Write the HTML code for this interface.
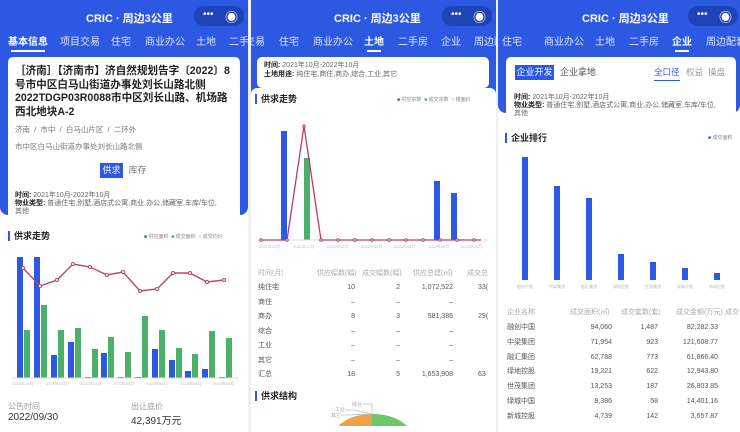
<!DOCTYPE html>
<html><head><meta charset="utf-8">
<style>
*{margin:0;padding:0;box-sizing:border-box}
body{width:740px;height:432px;overflow:hidden;background:#eef0f4;font-family:"Liberation Sans","Noto Sans CJK SC",sans-serif;position:relative;color:#333}
.a{position:absolute;white-space:nowrap}
.p{position:absolute;top:0;height:432px;overflow:hidden;background:#fff}
.blue{position:absolute;background:#2c58e2}
.hd{color:#fff;font-weight:bold;font-size:11px}
.cap{position:absolute;width:50px;height:20px;border-radius:10px;background:#1f44b8;color:#fff;font-size:10px}
.tab{position:absolute;top:33px;color:#dfe6ff;font-size:10px;white-space:nowrap}
.tab.on{color:#fff;font-weight:bold}
.tab.on:after{content:"";position:absolute;left:3px;right:3px;bottom:-4px;height:2px;background:#fff}
.card{position:absolute;background:#fff;border-radius:5px}
.s{font-size:7px;color:#666}
.s b{color:#222}
.sec{font-size:9px;font-weight:bold;color:#222;border-left:2px solid #2c58e2;padding-left:4px;line-height:10px}
.tr{font-size:7px;color:#555}
.th{font-size:7px;color:#aaa}
</style></head><body>

<!-- PANEL 1 -->
<div class="p" style="left:0;width:248px">
  <div class="blue" style="left:0;top:0;width:248px;height:215px;border-radius:0 0 8px 8px"></div>
  <div class="a hd" style="left:86px;top:10px">CRIC · 周边3公里</div>
  <div class="cap" style="left:194px;top:6px"><span class="a" style="left:9px;top:3px">•••</span><span class="a" style="left:31px;top:1px;font-size:13px">◉</span></div>
  <div class="tab on" style="left:8px">基本信息</div>
  <div class="tab" style="left:60px">项目交易</div>
  <div class="tab" style="left:111px">住宅</div>
  <div class="tab" style="left:145px">商业办公</div>
  <div class="tab" style="left:196px">土地</div>
  <div class="tab" style="left:229px">二手交易</div>
  <div class="card" style="left:8px;top:57px;width:232px;height:162px"></div>
  <div class="a" style="left:15px;top:65px;font-size:10.6px;font-weight:bold;color:#222;line-height:13.6px">［济南］【济南市】济自然规划告字〔2022〕8<br>号市中区白马山街道办事处刘长山路北侧<br>2022TDGP03R0088市中区刘长山路、机场路<br>西北地块A-2</div>
  <div class="a" style="left:15px;top:124px;font-size:7.5px;color:#777">济南 &nbsp;/&nbsp; 市中 &nbsp;/&nbsp; 白马山片区 &nbsp;/&nbsp; 二环外</div>
  <div class="a" style="left:15px;top:141px;font-size:7.5px;color:#777">市中区白马山街道办事处刘长山路北侧</div>
  <div class="a" style="left:100px;top:163px;width:23px;height:15px;background:#2c58e2;color:#fff;font-size:9px;text-align:center;line-height:15px">供求</div>
  <div class="a" style="left:125px;top:163px;width:25px;height:15px;color:#777;font-size:9px;text-align:center;line-height:15px">库存</div>
  <div class="a s" style="left:15px;top:192px;line-height:8px"><b>时间:</b> 2021年10月-2022年10月<br><b>物业类型:</b> 普通住宅,别墅,酒店式公寓,商业,办公,储藏室,车库/车位,<br>其他</div>
  <div class="a sec" style="left:8px;top:231px">供求走势</div>
  <div class="a" style="left:144px;top:233px;font-size:5px;color:#888"><span style="color:#2c58e2">■</span> 供应面积 &nbsp;<span style="color:#4caf6a">■</span> 成交面积 &nbsp;○ 成交均价</div>
  <svg class="a" style="left:0;top:250px" width="248" height="140">
    <g fill="#2c58e2">
      <rect x="17" y="7" width="6" height="121"/><rect x="34" y="7" width="6" height="121"/><rect x="51" y="105" width="6" height="23"/><rect x="68" y="92" width="6" height="36"/><rect x="85" y="127" width="6" height="1"/><rect x="101" y="103" width="6" height="25"/><rect x="118" y="127" width="6" height="1"/><rect x="135" y="127" width="6" height="1"/><rect x="152" y="99" width="6" height="29"/><rect x="169" y="110" width="6" height="18"/><rect x="185" y="121" width="6" height="7"/><rect x="202" y="119" width="6" height="9"/><rect x="219" y="127" width="6" height="1"/>
    </g>
    <g fill="#4caf6a">
      <rect x="24" y="80" width="6" height="48"/><rect x="41" y="55" width="6" height="73"/><rect x="58" y="80" width="6" height="48"/><rect x="75" y="78" width="6" height="50"/><rect x="92" y="99" width="6" height="29"/><rect x="108" y="87" width="6" height="41"/><rect x="125" y="102" width="6" height="26"/><rect x="142" y="66" width="6" height="62"/><rect x="159" y="80" width="6" height="48"/><rect x="176" y="98" width="6" height="30"/><rect x="192" y="104" width="6" height="24"/><rect x="209" y="81" width="6" height="47"/><rect x="226" y="88" width="6" height="40"/>
    </g>
    <polyline fill="none" stroke="#b9466a" stroke-width="1.4" points="23,18 40,36 57,30 73,14 90,17 107,25 123,22 140,41 157,39 173,23 190,23 207,32 224,30"/>
    <g fill="#fff" stroke="#b9466a" stroke-width="1"><circle cx="23" cy="18" r="1.5"/><circle cx="40" cy="36" r="1.5"/><circle cx="57" cy="30" r="1.5"/><circle cx="73" cy="14" r="1.5"/><circle cx="90" cy="17" r="1.5"/><circle cx="107" cy="25" r="1.5"/><circle cx="123" cy="22" r="1.5"/><circle cx="140" cy="41" r="1.5"/><circle cx="157" cy="39" r="1.5"/><circle cx="173" cy="23" r="1.5"/><circle cx="190" cy="23" r="1.5"/><circle cx="207" cy="32" r="1.5"/><circle cx="224" cy="30" r="1.5"/></g>
    <line x1="12" y1="128" x2="238" y2="128" stroke="#ddd"/>
    <g font-size="4" fill="#bbb"><text x="12" y="135">2021年10月</text><text x="46" y="135">2021年12月</text><text x="80" y="135">2022年02月</text><text x="113" y="135">2022年04月</text><text x="146" y="135">2022年06月</text><text x="180" y="135">2022年08月</text><text x="213" y="135">2022年10月</text></g>
  </svg>
  <div class="a" style="left:8px;top:401px;font-size:8px;color:#999">公告时间</div>
  <div class="a" style="left:8px;top:412px;font-size:10px;color:#333">2022/09/30</div>
  <div class="a" style="left:131px;top:401px;font-size:8px;color:#999">出让底价</div>
  <div class="a" style="left:131px;top:412px;font-size:10px;color:#333">42,391万元</div>
</div>

<!-- PANEL 2 -->
<div class="p" style="left:251px;width:245px">
  <div class="blue" style="left:0;top:0;width:245px;height:115px;border-radius:0 0 8px 8px"></div>
  <div class="a hd" style="left:83px;top:10px">CRIC · 周边3公里</div>
  <div class="cap" style="left:191px;top:6px"><span class="a" style="left:9px;top:3px">•••</span><span class="a" style="left:31px;top:1px;font-size:13px">◉</span></div>
  <div class="tab" style="left:-6px">交易</div>
  <div class="tab" style="left:28px">住宅</div>
  <div class="tab" style="left:62px">商业办公</div>
  <div class="tab on" style="left:113px">土地</div>
  <div class="tab" style="left:147px">二手房</div>
  <div class="tab" style="left:190px">企业</div>
  <div class="tab" style="left:223px">周边配</div>
  <div class="card" style="left:6px;top:57px;width:232px;height:31px"></div>
  <div class="a s" style="left:13px;top:62px;line-height:8.5px"><b>时间:</b> 2021年10月-2022年10月<br><b>土地用途:</b> 纯住宅,商住,商办,综合,工业,其它</div>
  <div class="a" style="left:0;top:88px;width:245px;height:344px;background:#fff;border-radius:6px 6px 0 0"></div>
  <div class="a sec" style="left:4px;top:94px">供求走势</div>
  <div class="a" style="left:146px;top:96px;font-size:5px;color:#888"><span style="color:#2c58e2">■</span> 供应宗数 &nbsp;<span style="color:#4caf6a">■</span> 成交宗数 &nbsp;○ 楼面价</div>
  <svg class="a" style="left:0;top:110px" width="245" height="145">
    <rect x="30" y="21" width="6" height="109" fill="#2c58e2"/>
    <rect x="53" y="48" width="6" height="82" fill="#4caf6a"/>
    <rect x="183" y="71" width="6" height="59" fill="#2c58e2"/>
    <rect x="200" y="83" width="6" height="47" fill="#2c58e2"/>
    <line x1="10" y1="130" x2="238" y2="130" stroke="#ddd"/>
    <polyline fill="none" stroke="#c0396b" stroke-width="1.3" points="10,130 36,130 53,16 70,130 230,130"/>
    <g fill="#fff" stroke="#c0396b"><circle cx="10" cy="130" r="1.3"/><circle cx="36" cy="130" r="1.3"/><circle cx="53" cy="16" r="1.3"/><circle cx="70" cy="130" r="1.3"/><circle cx="87" cy="130" r="1.3"/><circle cx="104" cy="130" r="1.3"/><circle cx="121" cy="130" r="1.3"/><circle cx="138" cy="130" r="1.3"/><circle cx="155" cy="130" r="1.3"/><circle cx="172" cy="130" r="1.3"/><circle cx="189" cy="130" r="1.3"/><circle cx="206" cy="130" r="1.3"/><circle cx="223" cy="130" r="1.3"/></g>
    <g font-size="4" fill="#bbb"><text x="8" y="138">2021年10月</text><text x="42" y="138">2021年12月</text><text x="76" y="138">2022年02月</text><text x="110" y="138">2022年04月</text><text x="143" y="138">2022年06月</text><text x="177" y="138">2022年08月</text><text x="210" y="138">2022年10月</text></g>
  </svg>
  <div class="a th" style="left:7px;top:268px">时间(月)</div>
  <div class="a th" style="left:66px;top:268px">供应幅数(幅)</div>
  <div class="a th" style="left:111px;top:268px">成交幅数(幅)</div>
  <div class="a th" style="left:162px;top:268px">供应总建(㎡)</div>
  <div class="a th" style="left:216px;top:268px">成交总</div>
  <div class="a tr" style="left:7px;top:281px;line-height:14.5px">纯住宅<br>商住<br>商办<br>综合<br>工业<br>其它<br>汇总</div>
  <div class="a tr" style="left:80px;top:281px;line-height:14.5px;text-align:right;width:24px">10<br>–<br>8<br>–<br>–<br>–<br>18</div>
  <div class="a tr" style="left:125px;top:281px;line-height:14.5px;text-align:right;width:24px">2<br>–<br>3<br>–<br>–<br>–<br>5</div>
  <div class="a tr" style="left:160px;top:281px;line-height:14.5px;text-align:right;width:42px">1,072,522<br>–<br>581,386<br>–<br>–<br>–<br>1,653,908</div>
  <div class="a tr" style="left:227px;top:281px;line-height:14.5px">33(<br><br>29(<br><br><br><br>63</div>
  <div class="a sec" style="left:4px;top:391px">供求结构</div>
  <svg class="a" style="left:0;top:396px" width="245" height="36">
    <path d="M87,30 Q100,18 121,18 L121,30 Z" fill="#f0a04b"/>
    <path d="M121,18 Q143,18 156,30 L121,30 Z" fill="#6cc66a"/>
    <polyline points="121,18 121,8 112,8" fill="none" stroke="#bbb" stroke-width=".7"/>
    <polyline points="121,18 102,14 94,14" fill="none" stroke="#bbb" stroke-width=".7"/>
    <polyline points="121,18 98,19 90,19" fill="none" stroke="#bbb" stroke-width=".7"/>
    <g font-size="5" fill="#aaa"><text x="101" y="10">综合</text><text x="84" y="15">工业</text><text x="80" y="21">其它</text></g>
  </svg>
</div>

<!-- PANEL 3 -->
<div class="p" style="left:498px;width:242px">
  <div class="blue" style="left:0;top:0;width:242px;height:113px;border-radius:0 0 8px 8px"></div>
  <div class="a hd" style="left:84px;top:10px">CRIC · 周边3公里</div>
  <div class="cap" style="left:190px;top:6px"><span class="a" style="left:9px;top:3px">•••</span><span class="a" style="left:31px;top:1px;font-size:13px">◉</span></div>
  <div class="tab" style="left:4px">住宅</div>
  <div class="tab" style="left:46px">商业办公</div>
  <div class="tab" style="left:97px">土地</div>
  <div class="tab" style="left:131px">二手房</div>
  <div class="tab on" style="left:174px">企业</div>
  <div class="tab" style="left:208px">周边配套</div>
  <div class="card" style="left:8px;top:57px;width:230px;height:68px"></div>
  <div class="a" style="left:17px;top:65px;width:39px;height:15px;background:#2c58e2;color:#fff;font-size:9px;text-align:center;line-height:15px">企业开发</div>
  <div class="a" style="left:62px;top:65px;font-size:9px;color:#555;line-height:15px">企业拿地</div>
  <div class="a" style="left:156px;top:65px;font-size:8.5px;color:#2c58e2;line-height:15px;border-bottom:1.5px solid #2c58e2;height:16px">全口径</div>
  <div class="a" style="left:188px;top:65px;font-size:8.5px;color:#999;line-height:15px">权益</div>
  <div class="a" style="left:210px;top:65px;font-size:8.5px;color:#999;line-height:15px">操盘</div>
  <div class="a s" style="left:16px;top:94px;line-height:8px"><b>时间:</b> 2021年10月-2022年10月<br><b>物业类型:</b> 普通住宅,别墅,酒店式公寓,商业,办公,储藏室,车库/车位,<br>其他</div>
  <div class="a sec" style="left:7px;top:133px">企业排行</div>
  <div class="a" style="left:210px;top:134px;font-size:5px;color:#888"><span style="color:#2c58e2">■</span> 成交面积</div>
  <svg class="a" style="left:0;top:150px" width="242" height="140">
    <g fill="#2c58e2">
      <rect x="24" y="7" width="6" height="123"/><rect x="56" y="36" width="6" height="94"/><rect x="88" y="48" width="6" height="82"/><rect x="120" y="104" width="6" height="26"/><rect x="152" y="112" width="6" height="18"/><rect x="184" y="118" width="6" height="12"/><rect x="216" y="123" width="6" height="7"/>
    </g>
    <g font-size="4" fill="#bbb"><text x="19" y="138">融创中国</text><text x="51" y="138">中梁集团</text><text x="83" y="138">融汇集团</text><text x="115" y="138">绿地控股</text><text x="147" y="138">世茂集团</text><text x="179" y="138">绿城中国</text><text x="211" y="138">新城控股</text></g>
  </svg>
  <div class="a th" style="left:9px;top:307px">企业名称</div>
  <div class="a th" style="left:72px;top:307px">成交面积(㎡)</div>
  <div class="a th" style="left:123px;top:307px">成交套数(套)</div>
  <div class="a th" style="left:178px;top:307px">成交金额(万元)</div>
  <div class="a th" style="left:227px;top:307px">成交</div>
  <div class="a tr" style="left:9px;top:321px;line-height:14.8px">融创中国<br>中梁集团<br>融汇集团<br>绿地控股<br>世茂集团<br>绿城中国<br>新城控股</div>
  <div class="a tr" style="left:80px;top:321px;line-height:14.8px;text-align:right;width:34px">94,060<br>71,954<br>62,788<br>19,221<br>13,253<br>8,386<br>4,739</div>
  <div class="a tr" style="left:130px;top:321px;line-height:14.8px;text-align:right;width:30px">1,487<br>923<br>773<br>622<br>187<br>58<br>142</div>
  <div class="a tr" style="left:170px;top:321px;line-height:14.8px;text-align:right;width:50px">82,282.33<br>121,608.77<br>61,866.40<br>12,943.80<br>26,803.85<br>14,401.16<br>3,657.87</div>
</div>
</body></html>
